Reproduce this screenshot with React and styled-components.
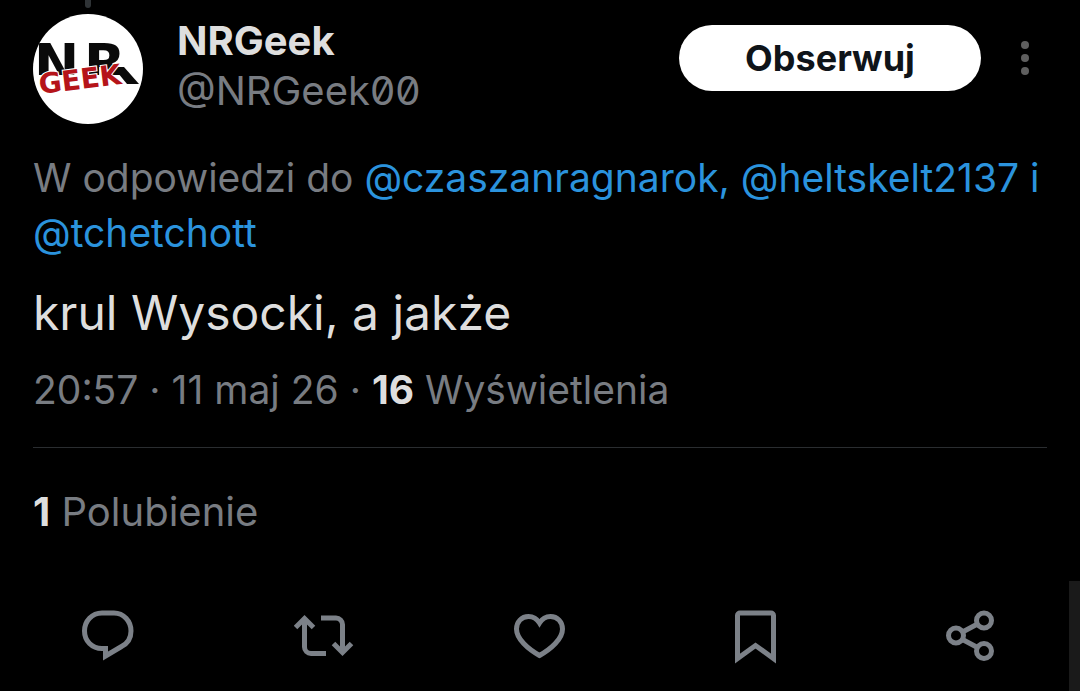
import styled, { createGlobalStyle } from 'styled-components';

const GlobalStyle = createGlobalStyle`
    *, *::before, *::after {
        box-sizing: border-box;
    }
    body {
        margin: 0;
        background-color: #000;
        color: #dedede;
        font-family: 'Inter', 'Liberation Sans', sans-serif;
        overflow: hidden;
    }
`;

const Page = styled.main`
    width: 100%;
`;

const Post = styled.article`
    display: flex;
    flex-direction: column;
    padding: 0 33px;
`;

const Header = styled.header`
    display: flex;
    align-items: flex-start;
`;

const AvatarColumn = styled.div`
    display: flex;
    flex-direction: column;
    align-items: center;
    gap: 6px;
    margin-right: 34px;
`;

const ThreadLine = styled.span`
    width: 6px;
    height: 8px;
    border-radius: 0 0 3px 3px;
    background-color: #2f3336;
`;

const Avatar = styled.svg`
    display: block;
    width: 110px;
    height: 110px;
    border-radius: 50%;
    background-color: #fff;
`;

const Names = styled.div`
    display: flex;
    flex-direction: column;
    flex: 1;
    padding-top: 16px;
`;

const DisplayName = styled.span`
    font-size: 40px;
    line-height: 50px;
    font-weight: 700;
`;

const Handle = styled.span`
    font-size: 40px;
    line-height: 50px;
    color: #787c82;
    font-feature-settings: 'zero';
`;

const HeaderActions = styled.div`
    display: flex;
    align-items: center;
    gap: 22px;
    padding-top: 25px;
`;

const FollowButton = styled.button`
    width: 302px;
    height: 66px;
    border: none;
    border-radius: 33px;
    background-color: #fff;
    color: #0f1419;
    font-family: inherit;
    font-size: 36px;
    font-weight: 700;
    cursor: pointer;
`;

const IconButton = styled.button`
    display: flex;
    align-items: center;
    justify-content: center;
    padding: 0;
    border: none;
    background: none;
    color: #7c8188;
    cursor: pointer;
`;

const MoreButton = styled(IconButton)`
    width: 44px;
    height: 66px;
    color: #5f5f5f;
`;

const ReplyingTo = styled.p`
    margin: 26px 0 0;
    font-size: 39px;
    line-height: 55px;
    color: #787c82;
`;

const Mention = styled.a`
    color: #2b93dd;
    text-decoration: none;
`;

const Body = styled.p`
    margin: 21px 0 0;
    font-size: 48px;
    line-height: 64px;
`;

const Meta = styled.p`
    margin: 20px 0 0;
    font-size: 39px;
    line-height: 50px;
    color: #787c82;
`;

const Count = styled.strong`
    font-weight: 700;
    color: #dedede;
`;

const Divider = styled.hr`
    width: 100%;
    height: 1px;
    margin: 32px 0 39px;
    border: none;
    background-color: #2a2d30;
`;

const Likes = styled.p`
    margin: 0;
    font-size: 40px;
    line-height: 50px;
    color: #787c82;
`;

const ActionBar = styled.div`
    display: grid;
    grid-template-columns: repeat(5, 1fr);
    justify-items: center;
    margin-top: 69px;
`;

const Icon = styled.svg`
    display: block;
    width: 60px;
    height: 60px;
    fill: none;
    stroke: currentColor;
    stroke-width: 5;
`;

const ScrollThumb = styled.div`
    position: fixed;
    right: 0;
    bottom: 0;
    width: 11px;
    height: 110px;
    background-color: #1a1a1a;
`;

const Logo = () => (
    <Avatar viewBox="0 0 110 110" role="img" aria-label="NRGeek">
        <clipPath id="initials">
            <rect width="110" height="61" />
        </clipPath>
        <g fontFamily="'DejaVu Sans', sans-serif" fontWeight="700">
            <g fontSize="54" fill="#0a0a0a" clipPath="url(#initials)">
                <text x="1" y="68">N</text>
                <text x="51" y="68">R</text>
            </g>
            <path d="M80 53H91L106 70H94Z" fill="#0a0a0a" />
            <text
                x="7"
                y="80"
                fontSize="28"
                fill="#b5141a"
                stroke="#fff"
                strokeWidth="2"
                paintOrder="stroke"
                transform="rotate(-7 7 80)"
            >
                GEEK
            </text>
        </g>
    </Avatar>
);

const actions = [
    {
        label: 'Odpowiedz',
        drawing: (
            <path d="M24 7h12c9.500 0 17 8 17 18 0 7-3.500 12.500-9.500 15.500L27.500 50v-7.500H24C14 42.500 6.500 35 6.500 25S14 7 24 7z" />
        ),
    },
    {
        label: 'Podaj dalej',
        drawing: (
            <>
                <path d="M1.500 21.500l9-9 9 9M10.500 13v28a6.500 6.500 0 0 0 6.500 6.500h15" />
                <path d="M39.500 37.500l9 9 9-9M48.500 46V18.500A6.500 6.500 0 0 0 42 12H27" />
            </>
        ),
    },
    {
        label: 'Polub',
        drawing: (
            <path d="M29.500 17C27 13 23 10.500 18.500 10.500c-7 0-12 5.500-12 12.500 0 10 11.500 20 23 26.500C41 43 52.500 33 52.500 23c0-7-5-12.500-12-12.500-4.500 0-8.500 2.500-11 6.500z" />
        ),
    },
    {
        label: 'Zakładka',
        drawing: (
            <path d="M14 7h31a2.500 2.500 0 0 1 2.500 2.500v43l-18-13-18 13v-43A2.500 2.500 0 0 1 14 7z" />
        ),
    },
    {
        label: 'Udostępnij',
        drawing: (
            <>
                <circle cx="42" cy="14.500" r="7.500" />
                <circle cx="14" cy="29.500" r="7.500" />
                <circle cx="42" cy="45" r="7.500" />
                <path d="M20.500 26l15-8M20.500 33.500l15 8" />
            </>
        ),
    },
];

export default function App() {
    return (
        <Page>
            <GlobalStyle />
            <Post>
                <Header>
                    <AvatarColumn>
                        <ThreadLine />
                        <Logo />
                    </AvatarColumn>
                    <Names>
                        <DisplayName>NRGeek</DisplayName>
                        <Handle>@NRGeek00</Handle>
                    </Names>
                    <HeaderActions>
                        <FollowButton type="button">Obserwuj</FollowButton>
                        <MoreButton type="button" aria-label="Więcej">
                            <svg width="8" height="34" viewBox="0 0 8 34" fill="currentColor">
                                <circle cx="4" cy="4" r="4" />
                                <circle cx="4" cy="17" r="4" />
                                <circle cx="4" cy="30" r="4" />
                            </svg>
                        </MoreButton>
                    </HeaderActions>
                </Header>
                <ReplyingTo>
                    W odpowiedzi do <Mention href="#czaszanragnarok">@czaszanragnarok,</Mention>{' '}
                    <Mention href="#heltskelt2137">@heltskelt2137 i</Mention>{' '}
                    <Mention href="#tchetchott">@tchetchott</Mention>
                </ReplyingTo>
                <Body>krul Wysocki, a jakże</Body>
                <Meta>
                    20:57 · 11 maj 26 · <Count>16</Count> Wyświetlenia
                </Meta>
                <Divider />
                <Likes>
                    <Count>1</Count> Polubienie
                </Likes>
            </Post>
            <ActionBar>
                {actions.map(({ label, drawing }) => (
                    <IconButton key={label} type="button" aria-label={label}>
                        <Icon viewBox="0 0 60 60">{drawing}</Icon>
                    </IconButton>
                ))}
            </ActionBar>
            <ScrollThumb />
        </Page>
    );
}
